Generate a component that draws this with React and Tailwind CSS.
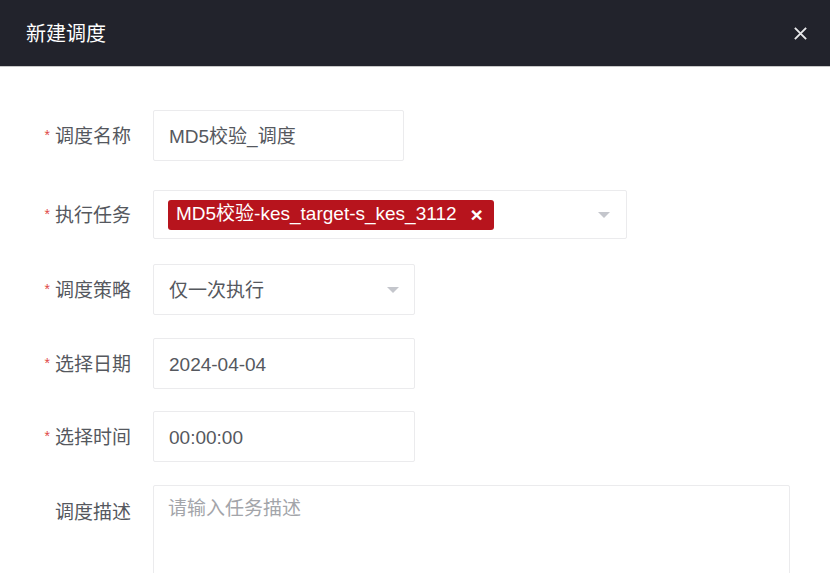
import React from "react";

const font = { fontFamily: '"Liberation Sans", "Noto Sans CJK SC", sans-serif' };

function Label({ children, required = true }) {
  return (
    <div className="w-[131px] shrink-0 text-right text-[19px] text-[#55585e] flex items-center justify-end pt-[3px]">
      {required && <span className="text-[#e04848] text-[14px] mr-[5px] relative -top-[2px]">*</span>}
      <span>{children}</span>
    </div>
  );
}

function Arrow() {
  return (
    <svg width="14" height="8" viewBox="0 0 14 8" className="shrink-0">
      <path d="M1 1 L13 1 L7 7 Z" fill="#c4c6cc" />
    </svg>
  );
}

export default function App() {
  return (
    <div className="w-[830px] h-[573px] bg-white overflow-hidden" style={font}>
      <div className="h-[67px] bg-[#22232c] flex items-center justify-between pl-[26px] pr-[22px] border-b border-[#c8c8c8]">
        <span className="text-white text-[20px] relative top-[1px]">新建调度</span>
        <svg width="15" height="15" viewBox="0 0 16 16">
          <path d="M2 2 L14 14 M14 2 L2 14" stroke="#e8e8ea" strokeWidth="2" />
        </svg>
      </div>
      <div className="pt-[43px] flex flex-col">
        <div className="flex items-center">
          <Label>调度名称</Label>
          <div className="ml-[22px] w-[251px] h-[51px] border border-[#ebebed] rounded-[2px] flex items-center pl-[15px] pt-[3px] text-[19px] text-[#55585e]">
            MD5校验_调度
          </div>
        </div>
        <div className="flex items-center mt-[29px]">
          <Label>执行任务</Label>
          <div className="ml-[22px] w-[474px] h-[49px] border border-[#ebebed] rounded-[2px] flex items-center pl-[14px] pr-[15px] justify-between">
            <div className="h-[30px] bg-[#b7141d] rounded-[3px] flex items-center pl-[8px] pr-[11px] text-white text-[19px]">
              <span>MD5校验-kes_target-s_kes_3112</span>
              <span className="ml-[14px] text-[21px] font-bold leading-none">×</span>
            </div>
            <Arrow />
          </div>
        </div>
        <div className="flex items-center mt-[25px]">
          <Label>调度策略</Label>
          <div className="ml-[22px] w-[262px] h-[51px] border border-[#ebebed] rounded-[2px] flex items-center pl-[15px] pr-[14px] justify-between text-[19px] text-[#55585e]">
            <span className="pt-[3px]">仅一次执行</span>
            <Arrow />
          </div>
        </div>
        <div className="flex items-center mt-[23px]">
          <Label>选择日期</Label>
          <div className="ml-[22px] w-[262px] h-[51px] border border-[#ebebed] rounded-[2px] flex items-center pl-[15px] pt-[3px] text-[19px] text-[#55585e]">
            2024-04-04
          </div>
        </div>
        <div className="flex items-center mt-[22px]">
          <Label>选择时间</Label>
          <div className="ml-[22px] w-[262px] h-[51px] border border-[#ebebed] rounded-[2px] flex items-center pl-[15px] pt-[3px] text-[19px] text-[#55585e]">
            00:00:00
          </div>
        </div>
        <div className="flex items-start mt-[23px]">
          <div className="pt-[11px]">
            <Label required={false}>调度描述</Label>
          </div>
          <div className="ml-[22px] w-[637px] h-[120px] border border-[#ebebed] rounded-[2px] pl-[14px] pt-[9px] text-[19px] text-[#a3a5aa]">
            请输入任务描述
          </div>
        </div>
      </div>
    </div>
  );
}
